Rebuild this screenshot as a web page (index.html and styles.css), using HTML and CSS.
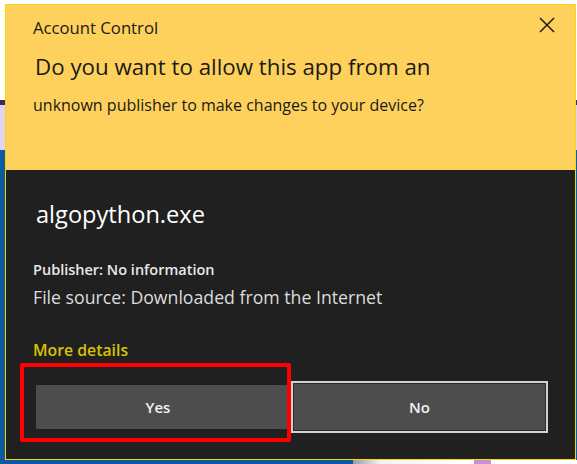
FILE: index.html
```html
<!DOCTYPE html>
<html lang="en">
<head>
<meta charset="utf-8">
<title>Account Control</title>
<link rel="stylesheet" href="styles.css">
</head>
<body>
<div class="dialog">
  <header class="head">
    <div class="title-row">
      <span class="title">Account Control</span>
      <button class="close" aria-label="Close">
        <svg width="16" height="16" viewBox="0 0 16 16"><path d="M1 1 L15 15 M15 1 L1 15" stroke="#1b1b1b" stroke-width="1.5" fill="none"/></svg>
      </button>
    </div>
    <h1 class="question">Do you want to allow this app from an</h1>
    <p class="sub">unknown publisher to make changes to your device?</p>
  </header>
  <section class="main">
    <div class="app">algopython.exe</div>
    <div class="pub">Publisher: No information</div>
    <div class="src">File source: Downloaded from the Internet</div>
    <a class="more">More details</a>
    <div class="buttons">
      <button class="btn yes">Yes</button>
      <button class="btn no">No</button>
      <span class="highlight"></span>
    </div>
  </section>
</div>
</body>
</html>
```
FILE: styles.css
```css
html, body {
  margin: 0;
  padding: 0;
}
body {
  width: 577px;
  height: 464px;
  overflow: hidden;
  font-family: "Open Sans", "Noto Sans", sans-serif;
  background:
    linear-gradient(to right, #0b5aa2 0 353px, #9a9a9a 353px, #f2f2f2 380px, #ffffff 474px, #cc8fd0 474px, #cc8fd0 491px, #ffffff 491px) left bottom / 100% 4px no-repeat,
    linear-gradient(to bottom, #ffffff 0 100px, #3b2c5e 100px 105px, #e2d0f6 105px 150px, #0b5aa2 150px);
}
.dialog {
  margin: 4px 0 0 5px;
  width: 571px;
  height: 456px;
  box-sizing: border-box;
  border: 1px solid #f7d700;
  display: flex;
  flex-direction: column;
  background: #202020;
}
.head {
  background: #fed15c;
  height: 165px;
  flex: none;
  box-sizing: border-box;
  padding: 12px 20px 0 27px;
  color: #1a1a1a;
}
.title-row {
  display: flex;
  justify-content: space-between;
  align-items: flex-start;
}
.title {
  font-size: 16.7px;
  line-height: 22px;
}
.close {
  border: 0;
  background: none;
  padding: 0;
  margin-top: 0;
  width: 16px;
  height: 16px;
  display: flex;
}
.question {
  margin: 14px 0 0 2px;
  font-size: 22.3px;
  font-weight: 400;
  line-height: 28px;
}
.sub {
  margin: 14px 0 0;
  font-size: 16px;
  line-height: 20px;
}
.main {
  flex: 1;
  padding: 28px 0 0 27px;
  display: flex;
  flex-direction: column;
  align-items: flex-start;
}
.app {
  margin-left: 3px;
  color: #ffffff;
  font-size: 23.6px;
  line-height: 32px;
}
.pub {
  margin-top: 30px;
  color: #e8e8e8;
  font-size: 14.5px;
  font-weight: 600;
  line-height: 20px;
}
.src {
  margin-top: 6px;
  color: #dcdcdc;
  font-size: 17.7px;
  font-weight: 500;
  line-height: 22px;
}
.more {
  margin-top: 31px;
  color: #d9c200;
  font-size: 15.8px;
  font-weight: 600;
  line-height: 22px;
}
.buttons {
  position: relative;
  margin-top: 20px;
  margin-left: 3px;
  display: flex;
  align-items: center;
  gap: 4px;
}
.btn {
  font-family: inherit;
  color: #f2f2f2;
  background: #4d4d4d;
  font-size: 15px;
  font-weight: 600;
  padding: 0;
}
.yes {
  width: 251px;
  height: 44px;
  border: 0;
  padding-right: 7px;
}
.no {
  width: 257px;
  height: 52px;
  border: 2px solid #d2d2d2;
  box-shadow: inset 0 0 0 1px #2c2c2c;
}
.highlight {
  position: absolute;
  left: -16px;
  top: -18px;
  width: 271px;
  height: 79px;
  box-sizing: border-box;
  border: 4px solid #ff0000;
  border-radius: 2px;
}
```
